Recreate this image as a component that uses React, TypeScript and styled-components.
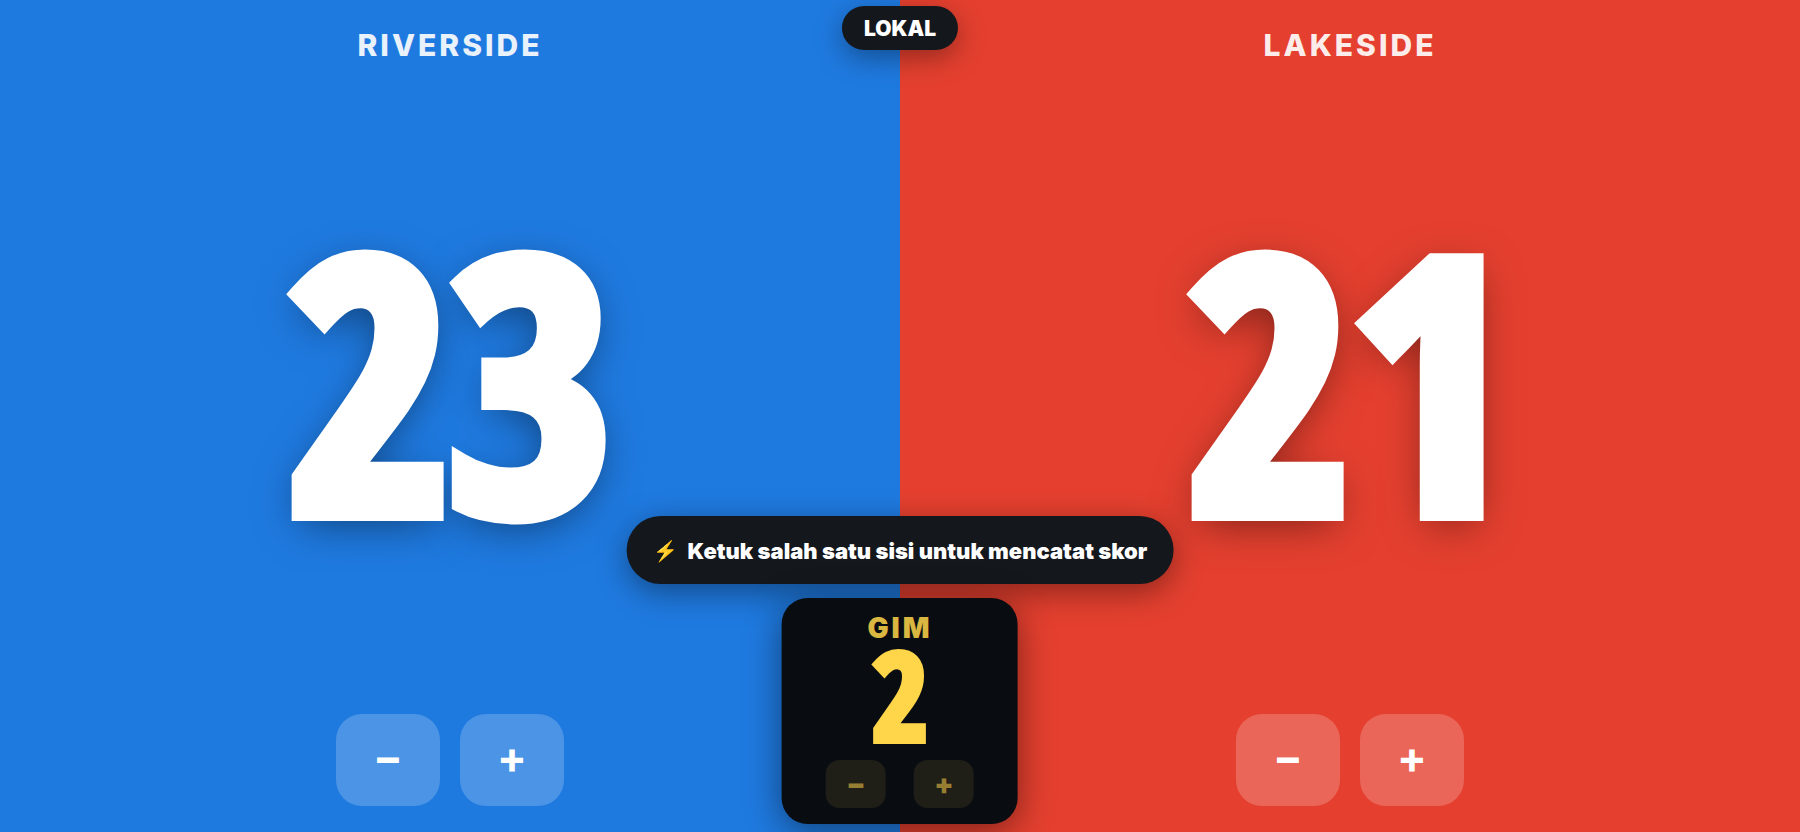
import React, { useState } from 'react';
import styled, { createGlobalStyle } from 'styled-components';

const GlobalStyle = createGlobalStyle`
  * { box-sizing: border-box; }
  body {
    margin: 0;
    background: #14181d;
    color: #fff;
    font-family: Inter, "Liberation Sans", sans-serif;
  }
`;

const digitFont = '"Open Sans Condensed", "Liberation Sans", sans-serif';

const Board = styled.main`
  position: relative;
  display: grid;
  grid-template-columns: 1fr 1fr;
  min-height: 100vh;
  overflow: hidden;
`;

const Side = styled.section<{ $color: string }>`
  display: flex;
  flex-direction: column;
  align-items: center;
  padding: 26px 24px;
  background: ${(p) => p.$color};
`;

const TeamName = styled.h2`
  margin: 0;
  font-size: 30px;
  line-height: 38px;
  font-weight: 800;
  letter-spacing: 3px;
  text-transform: uppercase;
  opacity: 0.9;
`;

const Score = styled.button`
  flex: 1;
  align-self: stretch;
  display: flex;
  align-items: center;
  justify-content: center;
  padding: 0 0 24px;
  border: 0;
  background: none;
  color: #fff;
  font-family: ${digitFont};
  font-size: 350px;
  line-height: 350px;
  font-weight: 800;
  -webkit-text-stroke: 18px #fff;
  text-shadow: 0 10px 44px rgba(0, 0, 0, 0.5);
  cursor: pointer;
`;

const Controls = styled.div<{ $gap: number }>`
  display: flex;
  gap: ${(p) => p.$gap}px;
`;

const StepButton = styled.button`
  display: flex;
  align-items: center;
  justify-content: center;
  width: 104px;
  height: 92px;
  padding: 0 0 6px;
  border: 0;
  border-radius: 26px;
  background: rgba(255, 255, 255, 0.2);
  color: #fff;
  font-family: inherit;
  font-size: 44px;
  line-height: 48px;
  font-weight: 700;
  cursor: pointer;
`;

const GameButton = styled(StepButton)`
  width: 60px;
  height: 48px;
  padding: 0;
  border-radius: 14px;
  background: rgba(255, 213, 74, 0.09);
  color: rgba(255, 213, 74, 0.55);
  font-size: 28px;
  line-height: 32px;
  font-weight: 900;
`;

const ModePill = styled.button`
  position: absolute;
  top: 6px;
  left: 50%;
  transform: translateX(-50%);
  height: 44px;
  padding: 2px 22px 0;
  border: 0;
  border-radius: 22px;
  background: #14181d;
  color: #fff;
  font-family: inherit;
  font-size: 21px;
  line-height: 28px;
  font-weight: 900;
  box-shadow: 0 8px 28px rgba(0, 0, 0, 0.35);
  cursor: pointer;
`;

const BottomStack = styled.div`
  position: absolute;
  bottom: 8px;
  left: 50%;
  transform: translateX(-50%);
  display: flex;
  flex-direction: column;
  align-items: center;
  gap: 14px;
`;

const Toast = styled.p`
  display: flex;
  align-items: center;
  gap: 10px;
  height: 68px;
  margin: 0;
  padding: 2px 26px 0;
  border-radius: 34px;
  background: #14181d;
  font-size: 22px;
  line-height: 30px;
  font-weight: 900;
  white-space: nowrap;
  box-shadow: 0 8px 32px rgba(0, 0, 0, 0.4);
`;

const Bolt = styled.span`
  font-size: 20px;
`;

const GameCard = styled.section`
  position: relative;
  display: flex;
  flex-direction: column;
  align-items: center;
  width: 236px;
  padding: 14px 16px 16px;
  border-radius: 26px;
  background: #090d12;
  color: #ffd54a;
  box-shadow: 0 8px 36px rgba(0, 0, 0, 0.45);
`;

const GameLabel = styled.h3`
  margin: 0;
  font-size: 28px;
  line-height: 32px;
  font-weight: 900;
  letter-spacing: 3px;
  opacity: 0.85;
`;

const GameNumber = styled.output`
  height: 116px;
  font-family: ${digitFont};
  font-size: 122px;
  line-height: 100px;
  font-weight: 800;
  -webkit-text-stroke: 6px #ffd54a;
`;

function Team({ name, color, start }: { name: string; color: string; start: number }) {
  const [score, setScore] = useState(start);
  const lower = () => setScore((n) => Math.max(0, n - 1));
  const raise = () => setScore((n) => n + 1);
  return (
    <Side $color={color}>
      <TeamName>{name}</TeamName>
      <Score onClick={raise}>{score}</Score>
      <Controls $gap={20}>
        <StepButton onClick={lower}>−</StepButton>
        <StepButton onClick={raise}>+</StepButton>
      </Controls>
    </Side>
  );
}

export default function App() {
  const [game, setGame] = useState(2);
  return (
    <>
      <GlobalStyle />
      <Board>
        <Team name="Riverside" color="#1f7ae0" start={23} />
        <Team name="Lakeside" color="#e5402f" start={21} />
        <ModePill>LOKAL</ModePill>
        <BottomStack>
          <Toast>
            <Bolt>⚡</Bolt>
            <span>Ketuk salah satu sisi untuk mencatat skor</span>
          </Toast>
          <GameCard>
            <GameLabel>GIM</GameLabel>
            <GameNumber>{game}</GameNumber>
            <Controls $gap={28}>
              <GameButton onClick={() => setGame((n) => Math.max(1, n - 1))}>−</GameButton>
              <GameButton onClick={() => setGame((n) => n + 1)}>+</GameButton>
            </Controls>
          </GameCard>
        </BottomStack>
      </Board>
    </>
  );
}
